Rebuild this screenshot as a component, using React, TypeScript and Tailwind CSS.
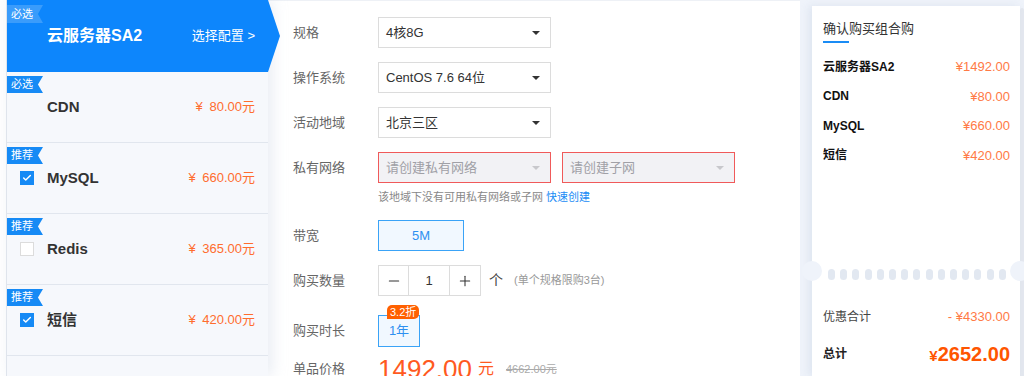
import { Minus, Plus, Check } from 'lucide-react'

const font = { fontFamily: '"Liberation Sans", Arial, "Noto Sans CJK SC", sans-serif' }

type Product = {
  tag: string
  name: string
  price: string
  checkbox: 'none' | 'on' | 'off'
}

const products: Product[] = [
  { tag: '必选', name: 'CDN', price: '80.00', checkbox: 'none' },
  { tag: '推荐', name: 'MySQL', price: '660.00', checkbox: 'on' },
  { tag: '推荐', name: 'Redis', price: '365.00', checkbox: 'off' },
  { tag: '推荐', name: '短信', price: '420.00', checkbox: 'on' },
  { tag: '', name: '', price: '', checkbox: 'none' },
]

const summary = [
  { name: '云服务器SA2', price: '1492.00' },
  { name: 'CDN', price: '80.00' },
  { name: 'MySQL', price: '660.00' },
  { name: '短信', price: '420.00' },
]

function Tag({ text, light }: { text: string; light?: boolean }) {
  return (
    <div
      className={`absolute left-0 flex items-center pl-[4px] text-[11px] leading-none text-white [clip-path:polygon(0_0,100%_0,86%_50%,100%_100%,0_100%)] ${
        light ? 'top-[5px] h-[18px] w-[36px] bg-[#3a9cfb]' : 'top-[4px] h-[17px] w-[36px] bg-[#168af5]'
      }`}
    >
      {text}
    </div>
  )
}

function Caret({ light }: { light?: boolean }) {
  return (
    <span
      className={`h-0 w-0 border-x-[4px] border-t-[4px] border-x-transparent ${
        light ? 'border-t-[#c8c8cc]' : 'border-t-[#333]'
      }`}
    />
  )
}

function Select({ value }: { value: string }) {
  return (
    <div className="flex h-[31px] w-[173px] items-center justify-between border border-[#dcdcdc] bg-white pl-[7px] pr-[10px] text-[13px] text-[#333]">
      <span>{value}</span>
      <Caret />
    </div>
  )
}

function ErrorSelect({ value }: { value: string }) {
  return (
    <div className="flex h-[31px] w-[173px] items-center justify-between border border-[#f05a5a] bg-[#f2f2f5] pl-[7px] pr-[10px] text-[13px] text-[#a0a0a6]">
      <span>{value}</span>
      <Caret light />
    </div>
  )
}

function Row({ label, children, className = '' }: { label: string; children: React.ReactNode; className?: string }) {
  return (
    <div className={`flex items-center ${className}`}>
      <div className="w-[85px] shrink-0 text-[13px] text-[#666]">{label}</div>
      {children}
    </div>
  )
}

export default function App() {
  return (
    <div className="flex h-[376px] w-[1024px] overflow-hidden bg-white" style={font}>
      {/* left gutter */}
      <div className="w-[6px] shrink-0 bg-white" />

      {/* Product list */}
      <div className="relative z-10 flex w-[262px] shrink-0 flex-col border-l border-[#dfe4ec] bg-[#f6f8fc] shadow-[4px_0_14px_rgba(190,200,220,0.35)]">
        <div className="relative flex h-[72px] w-[273px] shrink-0 items-center justify-between bg-[#0d86fc] pl-[40px] pr-[25px] [clip-path:polygon(0_0,261px_0,273px_50%,261px_100%,0_100%)]">
          <Tag text="必选" light />
          <span className="text-[16px] font-bold text-white">云服务器SA2</span>
          <span className="text-[13px] text-white">选择配置 &gt;</span>
        </div>
        {products.map((p, i) => (
          <div
            key={i}
            className="relative flex h-[71px] shrink-0 items-center border-b border-[#e1e6ee] pl-[13px] pr-[13px]"
          >
            {p.tag && <Tag text={p.tag} />}
            <div className="flex w-[27px] shrink-0">
              {p.checkbox === 'on' && (
                <span className="flex h-[14px] w-[14px] items-center justify-center bg-[#168af5]">
                  <Check size={10} strokeWidth={3.5} color="white" />
                </span>
              )}
              {p.checkbox === 'off' && <span className="h-[14px] w-[14px] border border-[#dcdcdc] bg-white" />}
            </div>
            <span className="flex-1 text-[15px] font-bold text-[#333]">{p.name}</span>
            {p.price && (
              <span className="text-[13px] text-[#ff6d2e]">
                ¥ <span className="ml-[3px]">{p.price}元</span>
              </span>
            )}
          </div>
        ))}
      </div>

      {/* Config form */}
      <div className="flex w-[532px] shrink-0 flex-col border-t border-[#eef1f6] bg-white pl-[25px] pt-[16px]">
        <Row label="规格">
          <Select value="4核8G" />
        </Row>
        <Row label="操作系统" className="mt-[14px]">
          <Select value="CentOS 7.6 64位" />
        </Row>
        <Row label="活动地域" className="mt-[14px]">
          <Select value="北京三区" />
        </Row>
        <Row label="私有网络" className="mt-[14px]">
          <div className="flex gap-[11px]">
            <ErrorSelect value="请创建私有网络" />
            <ErrorSelect value="请创建子网" />
          </div>
        </Row>
        <div className="ml-[85px] mt-[7px] h-[14px] text-[11px] leading-[14px] text-[#888]">
          该地域下没有可用私有网络或子网 <span className="text-[#1a8cf5]">快速创建</span>
        </div>
        <Row label="带宽" className="mt-[16px]">
          <div className="flex h-[31px] w-[86px] items-center justify-center border border-[#3aa3f7] bg-[#f1f8ff] text-[13px] text-[#2d8ff0]">
            5M
          </div>
        </Row>
        <Row label="购买数量" className="mt-[14px]">
          <div className="flex h-[31px] border border-[#dcdcdc] text-[#333]">
            <div className="flex w-[30px] items-center justify-center border-r border-[#dcdcdc]">
              <Minus size={16} strokeWidth={1.6} />
            </div>
            <div className="flex w-[41px] items-center justify-center border-r border-[#dcdcdc] text-[13px]">1</div>
            <div className="flex w-[30px] items-center justify-center">
              <Plus size={16} strokeWidth={1.6} />
            </div>
          </div>
          <span className="ml-[8px] text-[14px] text-[#444]">个</span>
          <span className="ml-[11px] text-[11px] text-[#999]">(单个规格限购3台)</span>
        </Row>
        <Row label="购买时长" className="mt-[19px]">
          <div className="relative flex h-[32px] w-[42px] items-center justify-center border border-[#3aa3f7] bg-[#f1f8ff] text-[13px] text-[#2d8ff0]">
            1年
            <span className="absolute -top-[11px] left-[8px] flex h-[14px] items-center whitespace-nowrap rounded-t-[5px] rounded-br-[5px] bg-[#ff6000] px-[3px] text-[11px] leading-none text-white">
              3.2折
            </span>
          </div>
        </Row>
        <Row label="单品价格" className="mt-[9px] h-[32px]">
          <span className="text-[26px] leading-none text-[#ff5a1f]">1492.00</span>
          <span className="ml-[6px] text-[16px] text-[#ff5a1f]">元</span>
          <span className="ml-[12px] text-[11px] text-[#aaa] line-through">4662.00元</span>
        </Row>
      </div>

      {/* Summary */}
      <div className="flex flex-1 bg-[#eff3fa] pl-[12px] pt-[6px]">
        <div className="relative flex w-[208px] shrink-0 flex-col bg-white pl-[11px] pr-[10px] shadow-[-3px_0_8px_rgba(200,210,228,0.45)]">
          <div className="pt-[15px] text-[13px] leading-[16px] text-[#333]">确认购买组合购</div>
          <div className="mt-[4px] h-[2px] w-[26px] bg-[#1a8cf5]" />
          <div className="mt-[9px] flex flex-col">
            {summary.map((s) => (
              <div key={s.name} className="flex h-[29.5px] items-center justify-between">
                <span className="text-[12px] font-bold text-[#111]">{s.name}</span>
                <span className="text-[13px] text-[#ff7a45]">¥{s.price}</span>
              </div>
            ))}
          </div>

          {/* perforation */}
          <div className="mt-[94px] flex h-[20px] items-center justify-between pl-[5px] pr-[4px]">
            {Array.from({ length: 15 }).map((_, i) => (
              <span key={i} className="h-[11px] w-[7px] shrink-0 rounded-full bg-[#e2e8f1]" />
            ))}
          </div>
          <span className="absolute left-[-10px] top-[255px] h-[20px] w-[20px] rounded-full bg-[#eff3fa]" />
          <span className="absolute right-[-10px] top-[255px] h-[20px] w-[20px] rounded-full bg-[#eff3fa]" />

          <div className="mt-[23px] flex h-[20px] items-center justify-between">
            <span className="text-[12px] text-[#444]">优惠合计</span>
            <span className="text-[13px] text-[#ff7a45]">- ¥4330.00</span>
          </div>
          <div className="mt-[13px] flex h-[28px] items-center justify-between">
            <span className="text-[12px] font-bold text-[#222]">总计</span>
            <span className="font-bold text-[#ff5500]">
              <span className="text-[15px]">¥</span>
              <span className="text-[20px]">2652.00</span>
            </span>
          </div>
        </div>
        <div className="mt-[2px] w-[4px] shrink-0 rounded-t-[2px] bg-[#e4e8ef]" />
      </div>
    </div>
  )
}
